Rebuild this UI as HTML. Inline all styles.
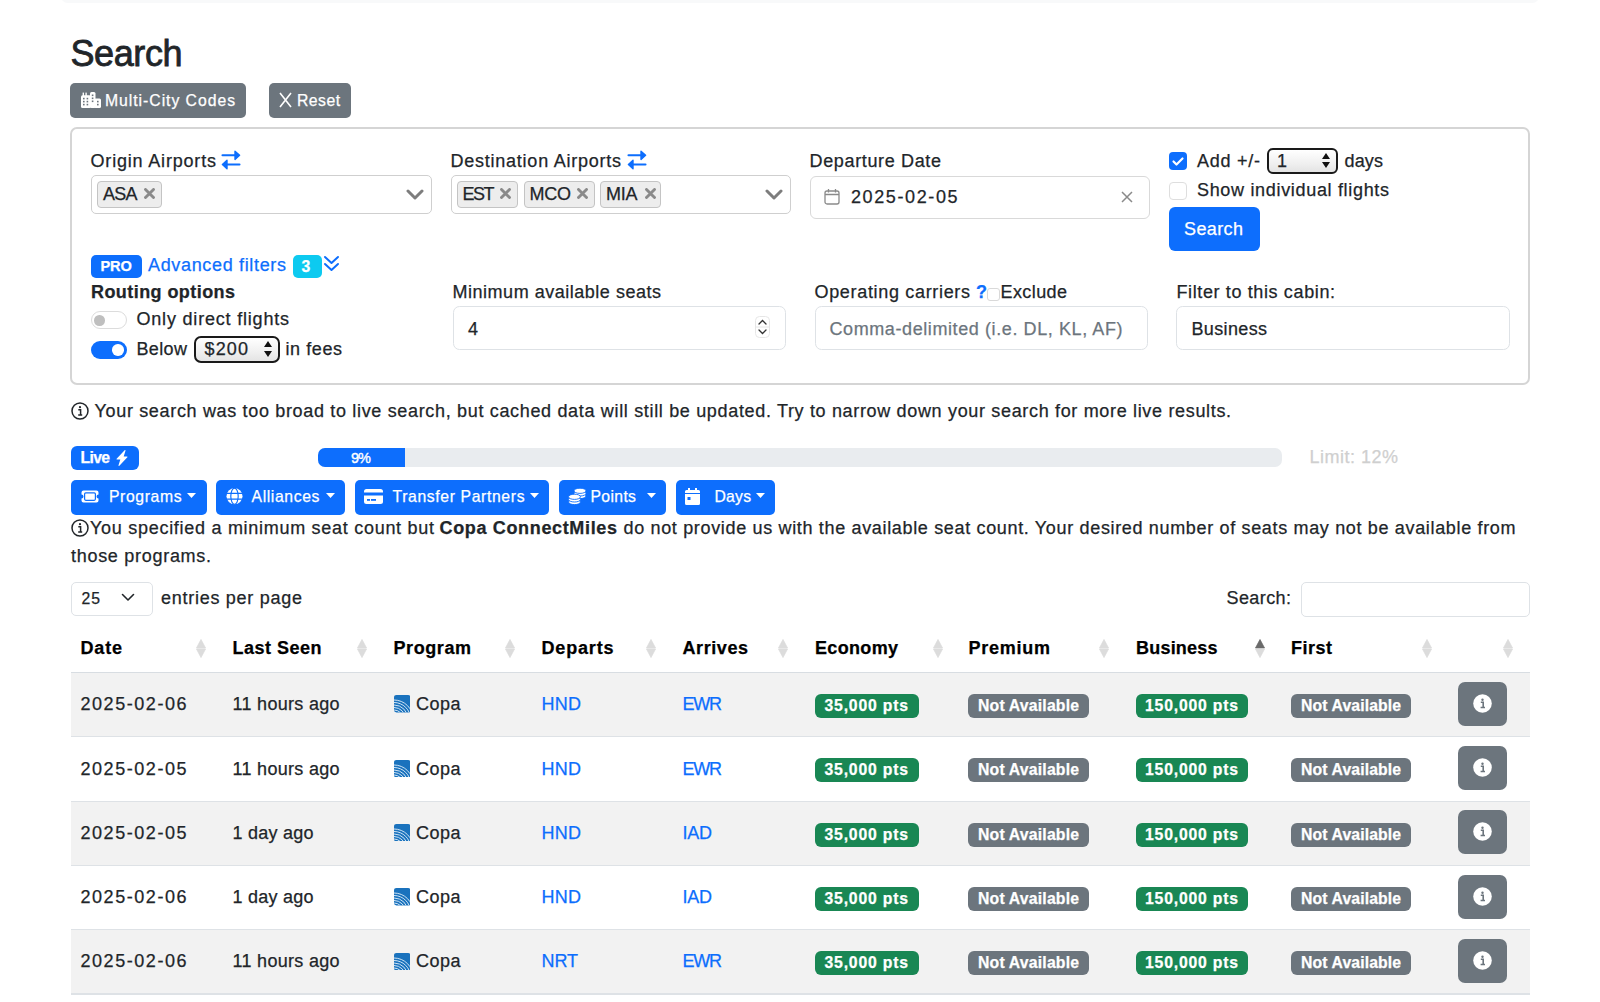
<!DOCTYPE html>
<html><head><meta charset="utf-8"><title>Search</title>
<style>
html,body{margin:0;padding:0;background:#fff;}
body{width:1600px;height:1002px;overflow:hidden;position:relative;font-family:"Liberation Sans",sans-serif;}
.t{position:absolute;white-space:nowrap;-webkit-text-stroke:0.25px currentColor;}
.r{position:absolute;}
</style></head><body>
<div class="r" style="left:61.00px;top:-10.00px;width:1478.00px;height:13.00px;background:#f8f9fa;border-radius:8px;"></div>
<div class="t" style="left:70.50px;top:35.53px;font-size:36px;line-height:36px;font-weight:400;color:#212529;letter-spacing:-0.412px;-webkit-text-stroke:0.8px #212529;">Search</div>
<div class="r" style="left:70.00px;top:83.00px;width:176.00px;height:35.00px;background:#6c757d;border-radius:5px;"></div>
<svg class="r" style="left:81.00px;top:91.50px;" width="20" height="16" viewBox="0 0 20 16"><g fill="#fff"><rect x="0" y="3.2" width="10" height="12.8" rx="1.5"/><rect x="1.6" y="0.6" width="1.4" height="4"/><rect x="4.4" y="0.6" width="1.4" height="4"/><rect x="9" y="0" width="5.5" height="16" rx="1.5"/><rect x="13" y="6.5" width="7" height="9.5" rx="1.5"/></g><g fill="#6c757d"><rect x="2" y="5.8" width="1.6" height="1.6"/><rect x="5.6" y="5.8" width="1.6" height="1.6"/><rect x="2" y="8.8" width="1.6" height="1.6"/><rect x="5.6" y="8.8" width="1.6" height="1.6"/><rect x="2" y="11.8" width="1.6" height="1.6"/><rect x="5.6" y="11.8" width="1.6" height="1.6"/><rect x="10.8" y="2.5" width="1.6" height="1.6"/><rect x="10.8" y="5.5" width="1.6" height="1.6"/><rect x="10.8" y="8.5" width="1.6" height="1.6"/><rect x="16" y="8.8" width="1.6" height="1.6"/><rect x="16" y="11.8" width="1.6" height="1.6"/></g></svg>
<div class="t" style="left:105.00px;top:92.67px;font-size:15.75px;line-height:15.75px;font-weight:400;color:#fff;letter-spacing:0.965px;">Multi-City Codes</div>
<div class="r" style="left:269.00px;top:83.00px;width:82.00px;height:35.00px;background:#6c757d;border-radius:5px;"></div>
<svg class="r" style="left:279.00px;top:92.00px;" width="13" height="16" viewBox="0 0 13 16"><path d="M1 1L12 15M12 1L1 15" stroke="#fff" stroke-width="1.6" fill="none"/></svg>
<div class="t" style="left:297.00px;top:92.67px;font-size:15.75px;line-height:15.75px;font-weight:400;color:#fff;letter-spacing:0.465px;">Reset</div>
<div class="r" style="left:70.00px;top:127.00px;width:1460.00px;height:258.00px;border:2px solid #d5d5d5;border-radius:7px;box-sizing:border-box;"></div>
<div class="t" style="left:90.50px;top:151.76px;font-size:18px;line-height:18px;font-weight:400;color:#212529;letter-spacing:0.819px;">Origin Airports</div>
<svg class="r" style="left:221.00px;top:150.00px;" width="20" height="20" viewBox="0 0 20 20"><g stroke="#0d6efd" stroke-linecap="round" stroke-linejoin="round"><path d="M1.5 5.3H15M6 14.5H18.5" stroke-width="2.1" fill="none"/><path d="M14 1.2L18.6 5.3 14 9.4z M6 10.3L1.4 14.5 6 18.7z" fill="#0d6efd" stroke-width="1.4"/></g></svg>
<div class="t" style="left:450.50px;top:151.76px;font-size:18px;line-height:18px;font-weight:400;color:#212529;letter-spacing:0.760px;">Destination Airports</div>
<svg class="r" style="left:626.50px;top:150.00px;" width="20" height="20" viewBox="0 0 20 20"><g stroke="#0d6efd" stroke-linecap="round" stroke-linejoin="round"><path d="M1.5 5.3H15M6 14.5H18.5" stroke-width="2.1" fill="none"/><path d="M14 1.2L18.6 5.3 14 9.4z M6 10.3L1.4 14.5 6 18.7z" fill="#0d6efd" stroke-width="1.4"/></g></svg>
<div class="t" style="left:809.50px;top:151.76px;font-size:18px;line-height:18px;font-weight:400;color:#212529;letter-spacing:0.650px;">Departure Date</div>
<div class="r" style="left:90.50px;top:175.00px;width:341.00px;height:39.00px;border:1.5px solid #cfcfcf;border-radius:5px;box-sizing:border-box;background:#fff;"></div>
<svg class="r" style="left:405.50px;top:188.50px;" width="18" height="11" viewBox="0 0 18 11"><path d="M2 2l7 7 7-7" stroke="#7d7d7d" stroke-width="3" fill="none" stroke-linecap="round" stroke-linejoin="round"/></svg>
<div class="r" style="left:97.00px;top:181.00px;width:64.50px;height:26.50px;background:#ededed;border:1.6px solid #c4c4c4;border-radius:4px;box-sizing:border-box;"></div>
<div class="t" style="left:103.00px;top:185.26px;font-size:18px;line-height:18px;font-weight:400;color:#212529;letter-spacing:-0.760px;">ASA</div>
<svg class="r" style="left:143.50px;top:187.50px;" width="11" height="11" viewBox="0 0 11 11"><path d="M1.5 1.5l8 8M9.5 1.5l-8 8" stroke="#8a8a8a" stroke-width="2.9" stroke-linecap="round"/></svg>
<div class="r" style="left:450.50px;top:175.00px;width:340.00px;height:39.00px;border:1.5px solid #cfcfcf;border-radius:5px;box-sizing:border-box;background:#fff;"></div>
<svg class="r" style="left:764.50px;top:188.50px;" width="18" height="11" viewBox="0 0 18 11"><path d="M2 2l7 7 7-7" stroke="#7d7d7d" stroke-width="3" fill="none" stroke-linecap="round" stroke-linejoin="round"/></svg>
<div class="r" style="left:456.50px;top:181.00px;width:61.50px;height:26.50px;background:#ededed;border:1.6px solid #c4c4c4;border-radius:4px;box-sizing:border-box;"></div>
<div class="t" style="left:462.50px;top:185.26px;font-size:18px;line-height:18px;font-weight:400;color:#212529;letter-spacing:-1.504px;">EST</div>
<svg class="r" style="left:499.50px;top:187.50px;" width="11" height="11" viewBox="0 0 11 11"><path d="M1.5 1.5l8 8M9.5 1.5l-8 8" stroke="#8a8a8a" stroke-width="2.9" stroke-linecap="round"/></svg>
<div class="r" style="left:523.50px;top:181.00px;width:71.00px;height:26.50px;background:#ededed;border:1.6px solid #c4c4c4;border-radius:4px;box-sizing:border-box;"></div>
<div class="t" style="left:529.50px;top:185.26px;font-size:18px;line-height:18px;font-weight:400;color:#212529;letter-spacing:-0.247px;">MCO</div>
<svg class="r" style="left:577.00px;top:187.50px;" width="11" height="11" viewBox="0 0 11 11"><path d="M1.5 1.5l8 8M9.5 1.5l-8 8" stroke="#8a8a8a" stroke-width="2.9" stroke-linecap="round"/></svg>
<div class="r" style="left:600.00px;top:181.00px;width:60.50px;height:26.50px;background:#ededed;border:1.6px solid #c4c4c4;border-radius:4px;box-sizing:border-box;"></div>
<div class="t" style="left:606.00px;top:185.26px;font-size:18px;line-height:18px;font-weight:400;color:#212529;letter-spacing:-0.250px;">MIA</div>
<svg class="r" style="left:644.50px;top:187.50px;" width="11" height="11" viewBox="0 0 11 11"><path d="M1.5 1.5l8 8M9.5 1.5l-8 8" stroke="#8a8a8a" stroke-width="2.9" stroke-linecap="round"/></svg>
<div class="r" style="left:809.50px;top:175.50px;width:340.50px;height:43.00px;border:1.5px solid #d9d9d9;border-radius:6px;box-sizing:border-box;background:#fff;"></div>
<svg class="r" style="left:824.00px;top:188.00px;" width="16" height="17" viewBox="0 0 16 17"><g stroke="#8a8a8a" stroke-width="1.3" fill="none"><rect x="1" y="3" width="14" height="13" rx="2"/><path d="M1 6.5h14M4.5 1v3.5M11.5 1v3.5"/></g></svg>
<div class="t" style="left:851.00px;top:187.76px;font-size:18px;line-height:18px;font-weight:400;color:#212529;letter-spacing:1.604px;">2025-02-05</div>
<svg class="r" style="left:1121.00px;top:191.00px;" width="12" height="12" viewBox="0 0 12 12"><path d="M1 1l10 10M11 1L1 11" stroke="#8a8a8a" stroke-width="1.5"/></svg>
<div class="r" style="left:1169.00px;top:152.00px;width:18.00px;height:18.00px;background:#0d6efd;border-radius:4px;"></div>
<svg class="r" style="left:1169.00px;top:152.00px;" width="18" height="18" viewBox="0 0 18 18"><path d="M4.5 9.5l3 3 6-6" stroke="#fff" stroke-width="2.2" fill="none" stroke-linecap="round" stroke-linejoin="round"/></svg>
<div class="t" style="left:1197.00px;top:151.76px;font-size:18px;line-height:18px;font-weight:400;color:#212529;letter-spacing:0.744px;">Add +/-</div>
<div class="r" style="left:1267.00px;top:147.50px;width:70.50px;height:26.50px;border:2px solid #1a1a1a;border-radius:6px;box-sizing:border-box;background:linear-gradient(#fff,#f0f0f0 60%,#e4e4e4);"></div>
<div class="t" style="left:1277.00px;top:151.76px;font-size:18px;line-height:18px;font-weight:400;color:#212529;letter-spacing:0.000px;">1</div>
<svg class="r" style="left:1321.00px;top:152.00px;" width="10" height="17" viewBox="0 0 10 17"><path d="M5 1l4 6H1z M5 16l4-6H1z" fill="#111"/></svg>
<div class="t" style="left:1344.50px;top:151.76px;font-size:18px;line-height:18px;font-weight:400;color:#212529;letter-spacing:0.160px;">days</div>
<div class="r" style="left:1169.00px;top:182.00px;width:18.00px;height:18.00px;border:1.2px solid #dedede;border-radius:4px;box-sizing:border-box;background:#fff;"></div>
<div class="t" style="left:1197.00px;top:180.76px;font-size:18px;line-height:18px;font-weight:400;color:#212529;letter-spacing:0.678px;">Show individual flights</div>
<div class="r" style="left:1169.00px;top:207.00px;width:90.50px;height:43.50px;background:#0d6efd;border-radius:6px;"></div>
<div class="t" style="left:1184.00px;top:219.76px;font-size:18px;line-height:18px;font-weight:400;color:#fff;letter-spacing:0.394px;">Search</div>
<div class="r" style="left:90.50px;top:254.50px;width:51.50px;height:23.50px;background:#0d6efd;border-radius:5px;"></div>
<div class="t" style="left:100.50px;top:259.44px;font-size:14.6px;line-height:14.6px;font-weight:700;color:#fff;letter-spacing:-0.169px;">PRO</div>
<div class="t" style="left:148.00px;top:255.76px;font-size:18px;line-height:18px;font-weight:400;color:#0d6efd;letter-spacing:0.663px;">Advanced filters</div>
<div class="r" style="left:293.00px;top:254.50px;width:28.50px;height:23.50px;background:#0dcaf0;border-radius:5px;"></div>
<div class="t" style="left:301.50px;top:258.67px;font-size:15.75px;line-height:15.75px;font-weight:700;color:#fff;letter-spacing:0.000px;">3</div>
<svg class="r" style="left:323.00px;top:255.00px;" width="17" height="17" viewBox="0 0 17 17"><path d="M2 2l6.5 6 6.5-6M2 9l6.5 6 6.5-6" stroke="#0d6efd" stroke-width="2" fill="none" stroke-linecap="round" stroke-linejoin="round"/></svg>
<div class="t" style="left:91.00px;top:282.76px;font-size:18px;line-height:18px;font-weight:700;color:#212529;letter-spacing:0.432px;">Routing options</div>
<div class="r" style="left:90.50px;top:311.00px;width:36.50px;height:18.00px;border:1.2px solid #dcdcdc;border-radius:9px;box-sizing:border-box;background:#fff;"></div>
<div class="r" style="left:94.00px;top:315.00px;width:10.50px;height:10.50px;background:#bfbfbf;border-radius:50%;"></div>
<div class="t" style="left:136.50px;top:310.26px;font-size:18px;line-height:18px;font-weight:400;color:#212529;letter-spacing:0.803px;">Only direct flights</div>
<div class="r" style="left:90.50px;top:340.50px;width:36.50px;height:18.00px;background:#0d6efd;border-radius:9px;"></div>
<div class="r" style="left:112.00px;top:344.00px;width:11.50px;height:11.50px;background:#fff;border-radius:50%;"></div>
<div class="t" style="left:136.50px;top:340.26px;font-size:18px;line-height:18px;font-weight:400;color:#212529;letter-spacing:0.369px;">Below</div>
<div class="r" style="left:194.00px;top:336.00px;width:86.00px;height:26.50px;border:2px solid #1a1a1a;border-radius:7px;box-sizing:border-box;background:linear-gradient(#fff,#f0f0f0 60%,#e4e4e4);"></div>
<div class="t" style="left:204.50px;top:340.26px;font-size:18px;line-height:18px;font-weight:400;color:#212529;letter-spacing:1.154px;">$200</div>
<svg class="r" style="left:263.00px;top:340.00px;" width="10" height="18" viewBox="0 0 10 18"><path d="M5 1l4 6H1z M5 17l4-6H1z" fill="#111"/></svg>
<div class="t" style="left:285.50px;top:340.26px;font-size:18px;line-height:18px;font-weight:400;color:#212529;letter-spacing:0.578px;">in fees</div>
<div class="t" style="left:452.50px;top:282.76px;font-size:18px;line-height:18px;font-weight:400;color:#212529;letter-spacing:0.520px;">Minimum available seats</div>
<div class="r" style="left:452.50px;top:306.00px;width:333.50px;height:43.50px;border:1.2px solid #dee2e6;border-radius:6.5px;box-sizing:border-box;background:#fff;"></div>
<div class="t" style="left:468.00px;top:319.76px;font-size:18px;line-height:18px;font-weight:400;color:#212529;letter-spacing:0.000px;">4</div>
<svg class="r" style="left:755.00px;top:316.00px;" width="15" height="22" viewBox="0 0 15 22"><rect x="0.5" y="0.5" width="14" height="21" rx="4" fill="#fff" stroke="#e6e6e6"/><path d="M4 8l3.5-3.5L11 8M4 14l3.5 3.5L11 14" stroke="#333" stroke-width="1.3" fill="none" stroke-linecap="round"/><path d="M1 11h13" stroke="#e6e6e6"/></svg>
<div class="t" style="left:814.50px;top:282.76px;font-size:18px;line-height:18px;font-weight:400;color:#212529;letter-spacing:0.674px;">Operating carriers</div>
<div class="t" style="left:976.00px;top:282.76px;font-size:18px;line-height:18px;font-weight:700;color:#0d6efd;letter-spacing:0.000px;">?</div>
<div class="r" style="left:987.00px;top:288.00px;width:13.00px;height:13.00px;border:1px solid #d9d9d9;border-radius:3px;box-sizing:border-box;background:#fff;"></div>
<div class="t" style="left:1000.50px;top:282.76px;font-size:18px;line-height:18px;font-weight:400;color:#212529;letter-spacing:0.411px;">Exclude</div>
<div class="r" style="left:814.50px;top:306.00px;width:333.00px;height:43.50px;border:1.2px solid #dee2e6;border-radius:6.5px;box-sizing:border-box;background:#fff;"></div>
<div class="t" style="left:829.50px;top:319.76px;font-size:18px;line-height:18px;font-weight:400;color:#6c757d;letter-spacing:0.592px;">Comma-delimited (i.e. DL, KL, AF)</div>
<div class="t" style="left:1176.50px;top:282.76px;font-size:18px;line-height:18px;font-weight:400;color:#212529;letter-spacing:0.623px;">Filter to this cabin:</div>
<div class="r" style="left:1176.00px;top:306.00px;width:333.50px;height:43.50px;border:1.2px solid #dee2e6;border-radius:6.5px;box-sizing:border-box;background:#fff;"></div>
<div class="t" style="left:1191.50px;top:319.76px;font-size:18px;line-height:18px;font-weight:400;color:#212529;letter-spacing:0.352px;">Business</div>
<svg class="r" style="left:70.50px;top:401.50px;" width="18" height="18" viewBox="0 0 18 18"><circle cx="9" cy="9" r="8" stroke="#212529" stroke-width="1.5" fill="none"/><circle cx="9" cy="5.2" r="1.1" fill="#212529"/><path d="M7.3 7.8h2.3v5M7.2 13h4" stroke="#212529" stroke-width="1.5" fill="none"/></svg>
<div class="t" style="left:94.50px;top:401.76px;font-size:18px;line-height:18px;font-weight:400;color:#212529;letter-spacing:0.667px;">Your search was too broad to live search, but cached data will still be updated. Try to narrow down your search for more live results.</div>
<div class="r" style="left:70.50px;top:446.00px;width:68.00px;height:24.00px;background:#0d6efd;border-radius:6px;"></div>
<div class="t" style="left:80.50px;top:450.17px;font-size:15.75px;line-height:15.75px;font-weight:700;color:#fff;letter-spacing:-0.671px;">Live</div>
<svg class="r" style="left:113.60px;top:449.80px;" width="16" height="16" viewBox="0 0 16 16"><path fill="#fff" d="M11.251.068a.5.5 0 0 1 .227.58L9.677 6.5H13a.5.5 0 0 1 .364.843l-8 8.5a.5.5 0 0 1-.842-.49L6.323 9.5H3a.5.5 0 0 1-.364-.843l8-8.5a.5.5 0 0 1 .615-.09z"/></svg>
<div class="r" style="left:318.00px;top:448.00px;width:963.50px;height:19.00px;background:#e9ecef;border-radius:7px;overflow:hidden;"></div>
<div class="r" style="left:318.00px;top:448.00px;width:86.50px;height:19.00px;background:#0d6efd;border-radius:7px 0 0 7px;"></div>
<div class="t" style="left:351.00px;top:450.53px;font-size:14.5px;line-height:14.5px;font-weight:400;color:#fff;letter-spacing:-0.957px;-webkit-text-stroke:0.4px #fff;">9%</div>
<div class="t" style="left:1309.50px;top:447.76px;font-size:18px;line-height:18px;font-weight:400;color:#cfcfcf;letter-spacing:0.497px;">Limit: 12%</div>
<div class="r" style="left:70.50px;top:480.00px;width:136.00px;height:34.50px;background:#0d6efd;border-radius:5px;"></div>
<svg class="r" style="left:81px;top:490px" width="18" height="13" viewBox="0 0 18 13"><path d="M2.5 0.5h13a2 2 0 0 1 2 2v2a2 2 0 0 0 0 4v2a2 2 0 0 1-2 2h-13a2 2 0 0 1-2-2v-2a2 2 0 0 0 0-4v-2a2 2 0 0 1 2-2z" fill="#fff"/><rect x="3.6" y="2.9" width="10.8" height="7.4" rx="1.2" fill="#fff" stroke="#0d6efd" stroke-width="1.2"/></svg>
<div class="t" style="left:109.00px;top:489.17px;font-size:15.75px;line-height:15.75px;font-weight:400;color:#fff;letter-spacing:0.605px;">Programs</div>
<svg class="r" style="left:187.00px;top:493.00px;" width="9" height="5" viewBox="0 0 9 5"><path d="M0 0h9L4.5 5z" fill="#fff"/></svg>
<div class="r" style="left:216.00px;top:480.00px;width:128.50px;height:34.50px;background:#0d6efd;border-radius:5px;"></div>
<svg class="r" style="left:225.6px;top:488.4px" width="17" height="16.5" viewBox="0 0 17 16.5"><circle cx="8.5" cy="8.25" r="8" fill="#fff"/><g stroke="#0d6efd" stroke-width="1.15" fill="none"><ellipse cx="8.5" cy="8.25" rx="3.7" ry="8"/><path d="M0 5.4h17M0 11.1h17"/></g></svg>
<div class="t" style="left:251.50px;top:489.17px;font-size:15.75px;line-height:15.75px;font-weight:400;color:#fff;letter-spacing:0.621px;">Alliances</div>
<svg class="r" style="left:326.00px;top:493.00px;" width="9" height="5" viewBox="0 0 9 5"><path d="M0 0h9L4.5 5z" fill="#fff"/></svg>
<div class="r" style="left:354.50px;top:480.00px;width:194.00px;height:34.50px;background:#0d6efd;border-radius:5px;"></div>
<svg class="r" style="left:364px;top:489px" width="19" height="15" viewBox="0 0 19 15"><rect x="0" y="0" width="19" height="15" rx="2.5" fill="#fff"/><rect x="0" y="3.5" width="19" height="3" fill="#0d6efd"/><rect x="3" y="10" width="3" height="1.8" fill="#0d6efd"/><rect x="7" y="10" width="5" height="1.8" fill="#0d6efd"/></svg>
<div class="t" style="left:392.50px;top:489.17px;font-size:15.75px;line-height:15.75px;font-weight:400;color:#fff;letter-spacing:0.628px;">Transfer Partners</div>
<svg class="r" style="left:530.00px;top:493.00px;" width="9" height="5" viewBox="0 0 9 5"><path d="M0 0h9L4.5 5z" fill="#fff"/></svg>
<div class="r" style="left:558.50px;top:480.00px;width:107.00px;height:34.50px;background:#0d6efd;border-radius:5px;"></div>
<svg class="r" style="left:567.5px;top:488px" width="18.5" height="17" viewBox="0 0 18.5 17"><g fill="#fff" stroke="#0d6efd" stroke-width="0.9"><ellipse cx="12" cy="8" rx="6" ry="2.6"/><ellipse cx="12" cy="5.4" rx="6" ry="2.6"/><ellipse cx="12" cy="2.8" rx="6" ry="2.6"/><ellipse cx="6.5" cy="14" rx="6" ry="2.6"/><ellipse cx="6.5" cy="11.4" rx="6" ry="2.6"/><ellipse cx="6.5" cy="8.8" rx="6" ry="2.6"/></g></svg>
<div class="t" style="left:590.50px;top:489.17px;font-size:15.75px;line-height:15.75px;font-weight:400;color:#fff;letter-spacing:0.345px;">Points</div>
<svg class="r" style="left:646.50px;top:493.00px;" width="9" height="5" viewBox="0 0 9 5"><path d="M0 0h9L4.5 5z" fill="#fff"/></svg>
<div class="r" style="left:675.50px;top:480.00px;width:99.50px;height:34.50px;background:#0d6efd;border-radius:5px;"></div>
<svg class="r" style="left:685px;top:488px" width="15" height="17" viewBox="0 0 15 17"><path d="M3 0h2v2h5V0h2v2h1.5A1.5 1.5 0 0 1 15 3.5V5H0V3.5A1.5 1.5 0 0 1 1.5 2H3z M0 6h15v9.5A1.5 1.5 0 0 1 13.5 17h-12A1.5 1.5 0 0 1 0 15.5z" fill="#fff"/><rect x="2.5" y="9" width="3" height="3" fill="#0d6efd"/></svg>
<div class="t" style="left:714.50px;top:489.17px;font-size:15.75px;line-height:15.75px;font-weight:400;color:#fff;letter-spacing:0.206px;">Days</div>
<svg class="r" style="left:756.00px;top:493.00px;" width="9" height="5" viewBox="0 0 9 5"><path d="M0 0h9L4.5 5z" fill="#fff"/></svg>
<svg class="r" style="left:70.50px;top:519.00px;" width="18" height="18" viewBox="0 0 18 18"><circle cx="9" cy="9" r="8" stroke="#212529" stroke-width="1.5" fill="none"/><circle cx="9" cy="5.2" r="1.1" fill="#212529"/><path d="M7.3 7.8h2.3v5M7.2 13h4" stroke="#212529" stroke-width="1.5" fill="none"/></svg>
<div class="t" style="left:90.00px;top:519.26px;font-size:18px;line-height:18px;font-weight:400;color:#212529;letter-spacing:0.716px;">You specified a minimum seat count but</div>
<div class="t" style="left:439.50px;top:519.26px;font-size:18px;line-height:18px;font-weight:700;color:#212529;letter-spacing:0.656px;">Copa ConnectMiles</div>
<div class="t" style="left:623.50px;top:519.26px;font-size:18px;line-height:18px;font-weight:400;color:#212529;letter-spacing:0.662px;">do not provide us with the available seat count. Your desired number of seats may not be available from</div>
<div class="t" style="left:71.00px;top:546.76px;font-size:18px;line-height:18px;font-weight:400;color:#212529;letter-spacing:0.711px;">those programs.</div>
<div class="r" style="left:70.50px;top:581.50px;width:82.00px;height:34.50px;border:1.2px solid #dee2e6;border-radius:5px;box-sizing:border-box;background:#fff;"></div>
<div class="t" style="left:81.50px;top:590.67px;font-size:15.75px;line-height:15.75px;font-weight:400;color:#212529;letter-spacing:0.983px;">25</div>
<svg class="r" style="left:121.00px;top:593.00px;" width="14" height="9" viewBox="0 0 14 9"><path d="M1.5 1.5l5.5 5.5 5.5-5.5" stroke="#212529" stroke-width="1.6" fill="none" stroke-linecap="round" stroke-linejoin="round"/></svg>
<div class="t" style="left:161.00px;top:588.76px;font-size:18px;line-height:18px;font-weight:400;color:#212529;letter-spacing:0.728px;">entries per page</div>
<div class="t" style="left:1226.50px;top:588.76px;font-size:18px;line-height:18px;font-weight:400;color:#212529;letter-spacing:0.412px;">Search:</div>
<div class="r" style="left:1300.50px;top:581.50px;width:229.00px;height:35.00px;border:1.2px solid #dee2e6;border-radius:5px;box-sizing:border-box;background:#fff;"></div>
<div class="t" style="left:80.50px;top:639.26px;font-size:18px;line-height:18px;font-weight:700;color:#000;letter-spacing:0.829px;">Date</div>
<svg class="r" style="left:195.50px;top:638.50px;" width="10" height="19" viewBox="0 0 10 19"><path d="M5 0.5L9.5 9H0.5z" fill="#dcdcdc" stroke="#dcdcdc" stroke-width="0.8" stroke-linejoin="round"/><path d="M5 18.5L9.5 10H0.5z" fill="#dcdcdc" stroke="#dcdcdc" stroke-width="0.8" stroke-linejoin="round"/></svg>
<div class="t" style="left:232.50px;top:639.26px;font-size:18px;line-height:18px;font-weight:700;color:#000;letter-spacing:0.497px;">Last Seen</div>
<svg class="r" style="left:356.50px;top:638.50px;" width="10" height="19" viewBox="0 0 10 19"><path d="M5 0.5L9.5 9H0.5z" fill="#dcdcdc" stroke="#dcdcdc" stroke-width="0.8" stroke-linejoin="round"/><path d="M5 18.5L9.5 10H0.5z" fill="#dcdcdc" stroke="#dcdcdc" stroke-width="0.8" stroke-linejoin="round"/></svg>
<div class="t" style="left:393.50px;top:639.26px;font-size:18px;line-height:18px;font-weight:700;color:#000;letter-spacing:0.580px;">Program</div>
<svg class="r" style="left:505.00px;top:638.50px;" width="10" height="19" viewBox="0 0 10 19"><path d="M5 0.5L9.5 9H0.5z" fill="#dcdcdc" stroke="#dcdcdc" stroke-width="0.8" stroke-linejoin="round"/><path d="M5 18.5L9.5 10H0.5z" fill="#dcdcdc" stroke="#dcdcdc" stroke-width="0.8" stroke-linejoin="round"/></svg>
<div class="t" style="left:541.50px;top:639.26px;font-size:18px;line-height:18px;font-weight:700;color:#000;letter-spacing:0.830px;">Departs</div>
<svg class="r" style="left:645.50px;top:638.50px;" width="10" height="19" viewBox="0 0 10 19"><path d="M5 0.5L9.5 9H0.5z" fill="#dcdcdc" stroke="#dcdcdc" stroke-width="0.8" stroke-linejoin="round"/><path d="M5 18.5L9.5 10H0.5z" fill="#dcdcdc" stroke="#dcdcdc" stroke-width="0.8" stroke-linejoin="round"/></svg>
<div class="t" style="left:682.50px;top:639.26px;font-size:18px;line-height:18px;font-weight:700;color:#000;letter-spacing:0.577px;">Arrives</div>
<svg class="r" style="left:778.00px;top:638.50px;" width="10" height="19" viewBox="0 0 10 19"><path d="M5 0.5L9.5 9H0.5z" fill="#dcdcdc" stroke="#dcdcdc" stroke-width="0.8" stroke-linejoin="round"/><path d="M5 18.5L9.5 10H0.5z" fill="#dcdcdc" stroke="#dcdcdc" stroke-width="0.8" stroke-linejoin="round"/></svg>
<div class="t" style="left:815.00px;top:639.26px;font-size:18px;line-height:18px;font-weight:700;color:#000;letter-spacing:0.331px;">Economy</div>
<svg class="r" style="left:932.50px;top:638.50px;" width="10" height="19" viewBox="0 0 10 19"><path d="M5 0.5L9.5 9H0.5z" fill="#dcdcdc" stroke="#dcdcdc" stroke-width="0.8" stroke-linejoin="round"/><path d="M5 18.5L9.5 10H0.5z" fill="#dcdcdc" stroke="#dcdcdc" stroke-width="0.8" stroke-linejoin="round"/></svg>
<div class="t" style="left:968.50px;top:639.26px;font-size:18px;line-height:18px;font-weight:700;color:#000;letter-spacing:0.745px;">Premium</div>
<svg class="r" style="left:1099.00px;top:638.50px;" width="10" height="19" viewBox="0 0 10 19"><path d="M5 0.5L9.5 9H0.5z" fill="#dcdcdc" stroke="#dcdcdc" stroke-width="0.8" stroke-linejoin="round"/><path d="M5 18.5L9.5 10H0.5z" fill="#dcdcdc" stroke="#dcdcdc" stroke-width="0.8" stroke-linejoin="round"/></svg>
<div class="t" style="left:1136.00px;top:639.26px;font-size:18px;line-height:18px;font-weight:700;color:#000;letter-spacing:0.210px;">Business</div>
<svg class="r" style="left:1254.50px;top:638.50px;" width="10" height="19" viewBox="0 0 10 19"><path d="M5 0.5L9.5 9H0.5z" fill="#6a6a6a" stroke="#6a6a6a" stroke-width="0.8" stroke-linejoin="round"/><path d="M5 18.5L9.5 10H0.5z" fill="#dcdcdc" stroke="#dcdcdc" stroke-width="0.8" stroke-linejoin="round"/></svg>
<div class="t" style="left:1291.00px;top:639.26px;font-size:18px;line-height:18px;font-weight:700;color:#000;letter-spacing:0.499px;">First</div>
<svg class="r" style="left:1421.50px;top:638.50px;" width="10" height="19" viewBox="0 0 10 19"><path d="M5 0.5L9.5 9H0.5z" fill="#dcdcdc" stroke="#dcdcdc" stroke-width="0.8" stroke-linejoin="round"/><path d="M5 18.5L9.5 10H0.5z" fill="#dcdcdc" stroke="#dcdcdc" stroke-width="0.8" stroke-linejoin="round"/></svg>
<svg class="r" style="left:1502.50px;top:638.50px;" width="10" height="19" viewBox="0 0 10 19"><path d="M5 0.5L9.5 9H0.5z" fill="#dcdcdc" stroke="#dcdcdc" stroke-width="0.8" stroke-linejoin="round"/><path d="M5 18.5L9.5 10H0.5z" fill="#dcdcdc" stroke="#dcdcdc" stroke-width="0.8" stroke-linejoin="round"/></svg>
<div class="r" style="left:70.50px;top:671.50px;width:1459.00px;height:1.20px;background:#d8dde2;"></div>
<div class="r" style="left:70.50px;top:672.50px;width:1459.00px;height:64.30px;background:#f2f2f2;"></div>
<div class="r" style="left:70.50px;top:736.20px;width:1459.00px;height:1.20px;background:#dee2e6;z-index:1;"></div>
<div class="t" style="left:80.50px;top:695.26px;font-size:18px;line-height:18px;font-weight:400;color:#212529;letter-spacing:1.548px;">2025-02-06</div>
<div class="t" style="left:232.50px;top:695.26px;font-size:18px;line-height:18px;font-weight:400;color:#212529;letter-spacing:0.297px;">11 hours ago</div>
<svg class="r" style="left:393.70px;top:695.30px;" width="16.6" height="17.6" viewBox="0 0 16.6 17.6"><defs><clipPath id="c0"><rect width="16.6" height="17.6" rx="2.5"/></clipPath></defs><rect width="16.6" height="17.6" rx="2.5" fill="#1a72bd"/><g clip-path="url(#c0)" stroke="#cfe4f5" stroke-width="1" fill="none"><circle cx="0" cy="24" r="19"/><circle cx="0" cy="24" r="16.5"/><circle cx="0" cy="24" r="14"/><circle cx="0" cy="24" r="11.5"/><circle cx="0" cy="24" r="9"/></g></svg>
<div class="t" style="left:416.00px;top:695.26px;font-size:18px;line-height:18px;font-weight:400;color:#212529;letter-spacing:0.491px;">Copa</div>
<div class="t" style="left:541.50px;top:695.26px;font-size:18px;line-height:18px;font-weight:400;color:#0d6efd;letter-spacing:0.251px;">HND</div>
<div class="t" style="left:682.50px;top:695.26px;font-size:18px;line-height:18px;font-weight:400;color:#0d6efd;letter-spacing:-1.248px;">EWR</div>
<div class="r" style="left:814.50px;top:694.00px;width:104.00px;height:24.00px;background:#198754;border-radius:6px;"></div>
<div class="t" style="left:824.50px;top:698.17px;font-size:15.75px;line-height:15.75px;font-weight:700;color:#fff;letter-spacing:0.815px;">35,000 pts</div>
<div class="r" style="left:968.00px;top:694.00px;width:121.00px;height:24.00px;background:#6c757d;border-radius:6px;"></div>
<div class="t" style="left:978.00px;top:698.17px;font-size:15.75px;line-height:15.75px;font-weight:700;color:#fff;letter-spacing:0.200px;">Not Available</div>
<div class="r" style="left:1135.50px;top:694.00px;width:112.00px;height:24.00px;background:#198754;border-radius:6px;"></div>
<div class="t" style="left:1145.00px;top:698.17px;font-size:15.75px;line-height:15.75px;font-weight:700;color:#fff;letter-spacing:0.808px;">150,000 pts</div>
<div class="r" style="left:1291.00px;top:694.00px;width:120.00px;height:24.00px;background:#6c757d;border-radius:6px;"></div>
<div class="t" style="left:1301.00px;top:698.17px;font-size:15.75px;line-height:15.75px;font-weight:700;color:#fff;letter-spacing:0.116px;">Not Available</div>
<div class="r" style="left:1458.00px;top:681.80px;width:49.00px;height:44.00px;background:#6c757d;border-radius:7px;"></div>
<svg class="r" style="left:1472.80px;top:693.70px;" width="19" height="19" viewBox="0 0 19 19"><circle cx="9.5" cy="9.5" r="9.3" fill="#fff"/><circle cx="9.5" cy="5.8" r="1.2" fill="#6c757d"/><path d="M7.8 8.3h2.4v5.2M7.6 13.5h4.4" stroke="#6c757d" stroke-width="1.6" fill="none"/></svg>
<div class="r" style="left:70.50px;top:800.50px;width:1459.00px;height:1.20px;background:#dee2e6;z-index:1;"></div>
<div class="t" style="left:80.50px;top:759.56px;font-size:18px;line-height:18px;font-weight:400;color:#212529;letter-spacing:1.548px;">2025-02-05</div>
<div class="t" style="left:232.50px;top:759.56px;font-size:18px;line-height:18px;font-weight:400;color:#212529;letter-spacing:0.297px;">11 hours ago</div>
<svg class="r" style="left:393.70px;top:759.60px;" width="16.6" height="17.6" viewBox="0 0 16.6 17.6"><defs><clipPath id="c1"><rect width="16.6" height="17.6" rx="2.5"/></clipPath></defs><rect width="16.6" height="17.6" rx="2.5" fill="#1a72bd"/><g clip-path="url(#c1)" stroke="#cfe4f5" stroke-width="1" fill="none"><circle cx="0" cy="24" r="19"/><circle cx="0" cy="24" r="16.5"/><circle cx="0" cy="24" r="14"/><circle cx="0" cy="24" r="11.5"/><circle cx="0" cy="24" r="9"/></g></svg>
<div class="t" style="left:416.00px;top:759.56px;font-size:18px;line-height:18px;font-weight:400;color:#212529;letter-spacing:0.491px;">Copa</div>
<div class="t" style="left:541.50px;top:759.56px;font-size:18px;line-height:18px;font-weight:400;color:#0d6efd;letter-spacing:0.251px;">HND</div>
<div class="t" style="left:682.50px;top:759.56px;font-size:18px;line-height:18px;font-weight:400;color:#0d6efd;letter-spacing:-1.248px;">EWR</div>
<div class="r" style="left:814.50px;top:758.30px;width:104.00px;height:24.00px;background:#198754;border-radius:6px;"></div>
<div class="t" style="left:824.50px;top:762.47px;font-size:15.75px;line-height:15.75px;font-weight:700;color:#fff;letter-spacing:0.815px;">35,000 pts</div>
<div class="r" style="left:968.00px;top:758.30px;width:121.00px;height:24.00px;background:#6c757d;border-radius:6px;"></div>
<div class="t" style="left:978.00px;top:762.47px;font-size:15.75px;line-height:15.75px;font-weight:700;color:#fff;letter-spacing:0.200px;">Not Available</div>
<div class="r" style="left:1135.50px;top:758.30px;width:112.00px;height:24.00px;background:#198754;border-radius:6px;"></div>
<div class="t" style="left:1145.00px;top:762.47px;font-size:15.75px;line-height:15.75px;font-weight:700;color:#fff;letter-spacing:0.808px;">150,000 pts</div>
<div class="r" style="left:1291.00px;top:758.30px;width:120.00px;height:24.00px;background:#6c757d;border-radius:6px;"></div>
<div class="t" style="left:1301.00px;top:762.47px;font-size:15.75px;line-height:15.75px;font-weight:700;color:#fff;letter-spacing:0.116px;">Not Available</div>
<div class="r" style="left:1458.00px;top:746.10px;width:49.00px;height:44.00px;background:#6c757d;border-radius:7px;"></div>
<svg class="r" style="left:1472.80px;top:758.00px;" width="19" height="19" viewBox="0 0 19 19"><circle cx="9.5" cy="9.5" r="9.3" fill="#fff"/><circle cx="9.5" cy="5.8" r="1.2" fill="#6c757d"/><path d="M7.8 8.3h2.4v5.2M7.6 13.5h4.4" stroke="#6c757d" stroke-width="1.6" fill="none"/></svg>
<div class="r" style="left:70.50px;top:801.10px;width:1459.00px;height:64.30px;background:#f2f2f2;"></div>
<div class="r" style="left:70.50px;top:864.80px;width:1459.00px;height:1.20px;background:#dee2e6;z-index:1;"></div>
<div class="t" style="left:80.50px;top:823.86px;font-size:18px;line-height:18px;font-weight:400;color:#212529;letter-spacing:1.548px;">2025-02-05</div>
<div class="t" style="left:232.50px;top:823.86px;font-size:18px;line-height:18px;font-weight:400;color:#212529;letter-spacing:0.243px;">1 day ago</div>
<svg class="r" style="left:393.70px;top:823.90px;" width="16.6" height="17.6" viewBox="0 0 16.6 17.6"><defs><clipPath id="c2"><rect width="16.6" height="17.6" rx="2.5"/></clipPath></defs><rect width="16.6" height="17.6" rx="2.5" fill="#1a72bd"/><g clip-path="url(#c2)" stroke="#cfe4f5" stroke-width="1" fill="none"><circle cx="0" cy="24" r="19"/><circle cx="0" cy="24" r="16.5"/><circle cx="0" cy="24" r="14"/><circle cx="0" cy="24" r="11.5"/><circle cx="0" cy="24" r="9"/></g></svg>
<div class="t" style="left:416.00px;top:823.86px;font-size:18px;line-height:18px;font-weight:400;color:#212529;letter-spacing:0.491px;">Copa</div>
<div class="t" style="left:541.50px;top:823.86px;font-size:18px;line-height:18px;font-weight:400;color:#0d6efd;letter-spacing:0.251px;">HND</div>
<div class="t" style="left:682.50px;top:823.86px;font-size:18px;line-height:18px;font-weight:400;color:#0d6efd;letter-spacing:-0.253px;">IAD</div>
<div class="r" style="left:814.50px;top:822.60px;width:104.00px;height:24.00px;background:#198754;border-radius:6px;"></div>
<div class="t" style="left:824.50px;top:826.77px;font-size:15.75px;line-height:15.75px;font-weight:700;color:#fff;letter-spacing:0.815px;">35,000 pts</div>
<div class="r" style="left:968.00px;top:822.60px;width:121.00px;height:24.00px;background:#6c757d;border-radius:6px;"></div>
<div class="t" style="left:978.00px;top:826.77px;font-size:15.75px;line-height:15.75px;font-weight:700;color:#fff;letter-spacing:0.200px;">Not Available</div>
<div class="r" style="left:1135.50px;top:822.60px;width:112.00px;height:24.00px;background:#198754;border-radius:6px;"></div>
<div class="t" style="left:1145.00px;top:826.77px;font-size:15.75px;line-height:15.75px;font-weight:700;color:#fff;letter-spacing:0.808px;">150,000 pts</div>
<div class="r" style="left:1291.00px;top:822.60px;width:120.00px;height:24.00px;background:#6c757d;border-radius:6px;"></div>
<div class="t" style="left:1301.00px;top:826.77px;font-size:15.75px;line-height:15.75px;font-weight:700;color:#fff;letter-spacing:0.116px;">Not Available</div>
<div class="r" style="left:1458.00px;top:810.40px;width:49.00px;height:44.00px;background:#6c757d;border-radius:7px;"></div>
<svg class="r" style="left:1472.80px;top:822.30px;" width="19" height="19" viewBox="0 0 19 19"><circle cx="9.5" cy="9.5" r="9.3" fill="#fff"/><circle cx="9.5" cy="5.8" r="1.2" fill="#6c757d"/><path d="M7.8 8.3h2.4v5.2M7.6 13.5h4.4" stroke="#6c757d" stroke-width="1.6" fill="none"/></svg>
<div class="r" style="left:70.50px;top:929.10px;width:1459.00px;height:1.20px;background:#dee2e6;z-index:1;"></div>
<div class="t" style="left:80.50px;top:888.16px;font-size:18px;line-height:18px;font-weight:400;color:#212529;letter-spacing:1.548px;">2025-02-06</div>
<div class="t" style="left:232.50px;top:888.16px;font-size:18px;line-height:18px;font-weight:400;color:#212529;letter-spacing:0.243px;">1 day ago</div>
<svg class="r" style="left:393.70px;top:888.20px;" width="16.6" height="17.6" viewBox="0 0 16.6 17.6"><defs><clipPath id="c3"><rect width="16.6" height="17.6" rx="2.5"/></clipPath></defs><rect width="16.6" height="17.6" rx="2.5" fill="#1a72bd"/><g clip-path="url(#c3)" stroke="#cfe4f5" stroke-width="1" fill="none"><circle cx="0" cy="24" r="19"/><circle cx="0" cy="24" r="16.5"/><circle cx="0" cy="24" r="14"/><circle cx="0" cy="24" r="11.5"/><circle cx="0" cy="24" r="9"/></g></svg>
<div class="t" style="left:416.00px;top:888.16px;font-size:18px;line-height:18px;font-weight:400;color:#212529;letter-spacing:0.491px;">Copa</div>
<div class="t" style="left:541.50px;top:888.16px;font-size:18px;line-height:18px;font-weight:400;color:#0d6efd;letter-spacing:0.251px;">HND</div>
<div class="t" style="left:682.50px;top:888.16px;font-size:18px;line-height:18px;font-weight:400;color:#0d6efd;letter-spacing:-0.253px;">IAD</div>
<div class="r" style="left:814.50px;top:886.90px;width:104.00px;height:24.00px;background:#198754;border-radius:6px;"></div>
<div class="t" style="left:824.50px;top:891.07px;font-size:15.75px;line-height:15.75px;font-weight:700;color:#fff;letter-spacing:0.815px;">35,000 pts</div>
<div class="r" style="left:968.00px;top:886.90px;width:121.00px;height:24.00px;background:#6c757d;border-radius:6px;"></div>
<div class="t" style="left:978.00px;top:891.07px;font-size:15.75px;line-height:15.75px;font-weight:700;color:#fff;letter-spacing:0.200px;">Not Available</div>
<div class="r" style="left:1135.50px;top:886.90px;width:112.00px;height:24.00px;background:#198754;border-radius:6px;"></div>
<div class="t" style="left:1145.00px;top:891.07px;font-size:15.75px;line-height:15.75px;font-weight:700;color:#fff;letter-spacing:0.808px;">150,000 pts</div>
<div class="r" style="left:1291.00px;top:886.90px;width:120.00px;height:24.00px;background:#6c757d;border-radius:6px;"></div>
<div class="t" style="left:1301.00px;top:891.07px;font-size:15.75px;line-height:15.75px;font-weight:700;color:#fff;letter-spacing:0.116px;">Not Available</div>
<div class="r" style="left:1458.00px;top:874.70px;width:49.00px;height:44.00px;background:#6c757d;border-radius:7px;"></div>
<svg class="r" style="left:1472.80px;top:886.60px;" width="19" height="19" viewBox="0 0 19 19"><circle cx="9.5" cy="9.5" r="9.3" fill="#fff"/><circle cx="9.5" cy="5.8" r="1.2" fill="#6c757d"/><path d="M7.8 8.3h2.4v5.2M7.6 13.5h4.4" stroke="#6c757d" stroke-width="1.6" fill="none"/></svg>
<div class="r" style="left:70.50px;top:929.70px;width:1459.00px;height:64.30px;background:#f2f2f2;"></div>
<div class="r" style="left:70.50px;top:993.40px;width:1459.00px;height:1.20px;background:#dee2e6;z-index:1;"></div>
<div class="t" style="left:80.50px;top:952.46px;font-size:18px;line-height:18px;font-weight:400;color:#212529;letter-spacing:1.548px;">2025-02-06</div>
<div class="t" style="left:232.50px;top:952.46px;font-size:18px;line-height:18px;font-weight:400;color:#212529;letter-spacing:0.297px;">11 hours ago</div>
<svg class="r" style="left:393.70px;top:952.50px;" width="16.6" height="17.6" viewBox="0 0 16.6 17.6"><defs><clipPath id="c4"><rect width="16.6" height="17.6" rx="2.5"/></clipPath></defs><rect width="16.6" height="17.6" rx="2.5" fill="#1a72bd"/><g clip-path="url(#c4)" stroke="#cfe4f5" stroke-width="1" fill="none"><circle cx="0" cy="24" r="19"/><circle cx="0" cy="24" r="16.5"/><circle cx="0" cy="24" r="14"/><circle cx="0" cy="24" r="11.5"/><circle cx="0" cy="24" r="9"/></g></svg>
<div class="t" style="left:416.00px;top:952.46px;font-size:18px;line-height:18px;font-weight:400;color:#212529;letter-spacing:0.491px;">Copa</div>
<div class="t" style="left:541.50px;top:952.46px;font-size:18px;line-height:18px;font-weight:400;color:#0d6efd;letter-spacing:-0.083px;">NRT</div>
<div class="t" style="left:682.50px;top:952.46px;font-size:18px;line-height:18px;font-weight:400;color:#0d6efd;letter-spacing:-1.248px;">EWR</div>
<div class="r" style="left:814.50px;top:951.20px;width:104.00px;height:24.00px;background:#198754;border-radius:6px;"></div>
<div class="t" style="left:824.50px;top:955.37px;font-size:15.75px;line-height:15.75px;font-weight:700;color:#fff;letter-spacing:0.815px;">35,000 pts</div>
<div class="r" style="left:968.00px;top:951.20px;width:121.00px;height:24.00px;background:#6c757d;border-radius:6px;"></div>
<div class="t" style="left:978.00px;top:955.37px;font-size:15.75px;line-height:15.75px;font-weight:700;color:#fff;letter-spacing:0.200px;">Not Available</div>
<div class="r" style="left:1135.50px;top:951.20px;width:112.00px;height:24.00px;background:#198754;border-radius:6px;"></div>
<div class="t" style="left:1145.00px;top:955.37px;font-size:15.75px;line-height:15.75px;font-weight:700;color:#fff;letter-spacing:0.808px;">150,000 pts</div>
<div class="r" style="left:1291.00px;top:951.20px;width:120.00px;height:24.00px;background:#6c757d;border-radius:6px;"></div>
<div class="t" style="left:1301.00px;top:955.37px;font-size:15.75px;line-height:15.75px;font-weight:700;color:#fff;letter-spacing:0.116px;">Not Available</div>
<div class="r" style="left:1458.00px;top:939.00px;width:49.00px;height:44.00px;background:#6c757d;border-radius:7px;"></div>
<svg class="r" style="left:1472.80px;top:950.90px;" width="19" height="19" viewBox="0 0 19 19"><circle cx="9.5" cy="9.5" r="9.3" fill="#fff"/><circle cx="9.5" cy="5.8" r="1.2" fill="#6c757d"/><path d="M7.8 8.3h2.4v5.2M7.6 13.5h4.4" stroke="#6c757d" stroke-width="1.6" fill="none"/></svg>
</body></html>
